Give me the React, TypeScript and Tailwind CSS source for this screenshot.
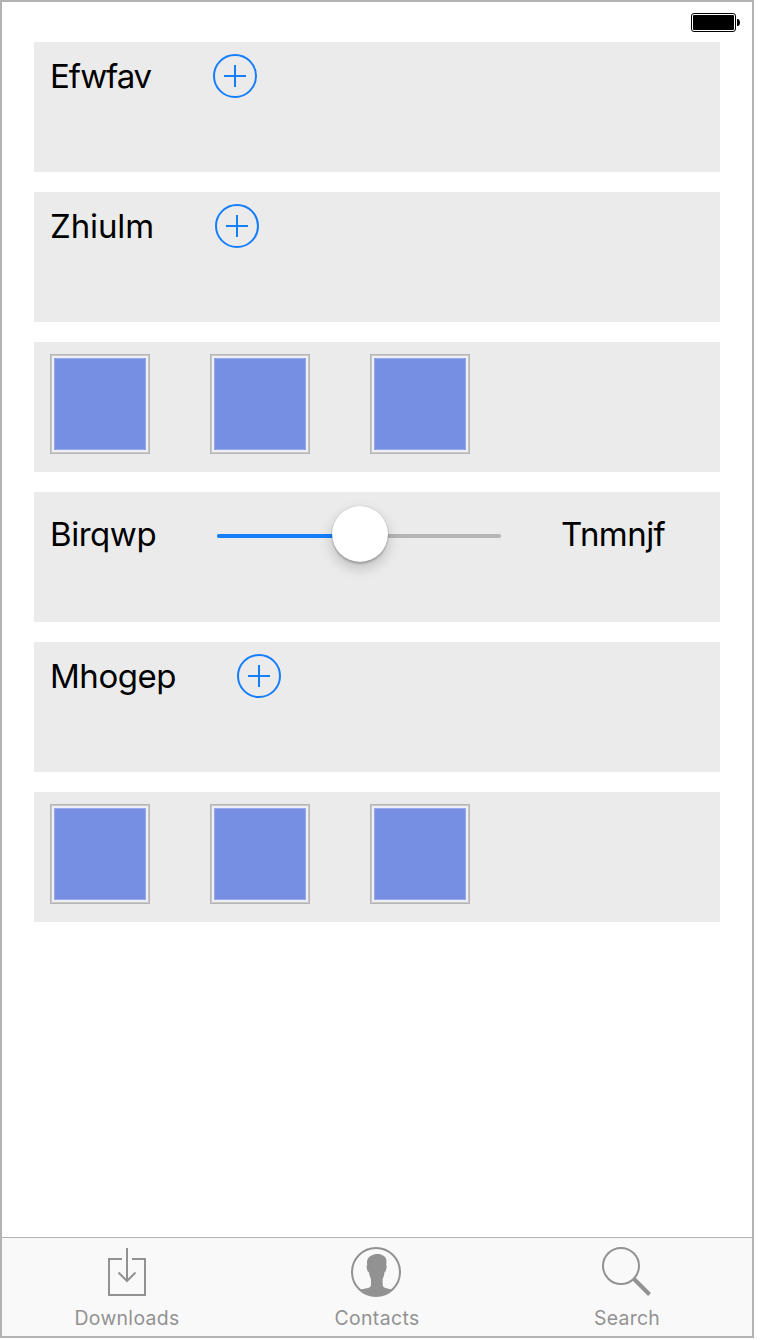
import type { ReactNode } from "react";

function Row({ children, className = "" }: { children: ReactNode; className?: string }) {
  return (
    <section className={`flex h-[130px] shrink-0 items-start bg-[#ebebeb] px-4 pt-3 ${className}`}>
      {children}
    </section>
  );
}

function Label({ text, className }: { text: string; className: string }) {
  return (
    <span className={`h-11 shrink-0 whitespace-nowrap text-[33px] leading-[44px] text-black ${className}`}>
      {text}
    </span>
  );
}

function AddButton() {
  return (
    <button type="button" aria-label="Add" className="size-11 shrink-0">
      <svg viewBox="0 0 44 44" className="block size-11" fill="none" stroke="#147efb" strokeWidth="2">
        <circle cx="22" cy="22" r="21" />
        <path d="M11 22H33M22 11V33" />
      </svg>
    </button>
  );
}

function Swatches() {
  return (
    <Row className="gap-[60px]">
      {[0, 1, 2].map((i) => (
        <div key={i} className="size-[100px] border border-[#b6b6b6] bg-[#c8c8c8] p-px">
          <div className="size-full border border-[#f0f0f2] bg-[#eceffa] p-px">
            <div className="size-full border border-[#95a9ec] bg-[#768fe3]" />
          </div>
        </div>
      ))}
    </Row>
  );
}

function Slider() {
  return (
    <div className="relative mx-[60px] flex h-11 w-[284px] shrink-0 items-center pt-1">
      <div className="flex h-1 w-full overflow-hidden rounded-full bg-[#b5b5b5]">
        <div className="w-1/2 bg-[#147efb]" />
      </div>
      <div className="absolute left-[115px] top-[-6px] size-14 rounded-full bg-white shadow-[0_0_1px_rgba(0,0,0,0.25),0_2px_2px_rgba(0,0,0,0.2),0_6px_14px_rgba(0,0,0,0.2)]" />
    </div>
  );
}

function Tab({ label, className, children }: { label: string; className: string; children: ReactNode }) {
  return (
    <button type="button" className="flex w-[250px] flex-col items-center pt-2 text-[#929292]">
      <svg viewBox="0 0 52 52" className="size-[52px] shrink-0" fill="none" stroke="currentColor" strokeWidth="2">
        {children}
      </svg>
      <span className={`mt-2 whitespace-nowrap text-[19.4px] leading-6 ${className}`}>{label}</span>
    </button>
  );
}

export default function App() {
  return (
    <div className="h-[1340px] w-[760px] bg-white font-['Inter','Liberation_Sans',sans-serif]">
      <div className="flex h-[1338px] w-[754px] flex-col border-2 border-[#b2b2b2] bg-white">
        <header className="flex h-10 shrink-0 justify-end pr-3 pt-[11px]">
          <svg viewBox="0 0 49 19" className="h-[19px] w-[49px]">
            <rect x="0.5" y="0.5" width="44" height="18" rx="2.5" fill="none" stroke="#000" />
            <rect x="2" y="2" width="41" height="15" rx="1" />
            <path d="M46 6h1.2Q49 7 49 9.5T47.2 13H46Z" />
          </svg>
        </header>
        <main className="flex flex-1 flex-col gap-5 pl-8 pr-8">
          <Row>
            <Label text="Efwfav" className="w-[163px] tracking-[-1.15px]" />
            <AddButton />
          </Row>
          <Row>
            <Label text="Zhiulm" className="w-[165px] tracking-[-0.1px]" />
            <AddButton />
          </Row>
          <Swatches />
          <Row className="pt-5">
            <Label text="Birqwp" className="w-[107px] tracking-[-0.45px]" />
            <Slider />
            <Label text="Tnmnjf" className="w-[105px] tracking-[-0.55px]" />
          </Row>
          <Row>
            <Label text="Mhogep" className="w-[187px] tracking-[-0.45px]" />
            <AddButton />
          </Row>
          <Swatches />
        </main>
        <nav className="flex h-[99px] shrink-0 border-t border-[#b2b2b2] bg-[#f9f9f9]">
          <Tab label="Downloads" className="tracking-[0.33px]">
            <path d="M21 13H8V49H44V13H31M26 2V35M17.5 26.5L26 35L34.5 26.5" />
          </Tab>
          <Tab label="Contacts" className="tracking-[0.4px]">
            <circle cx="25" cy="26" r="24" />
            <path
              d="M16.2 19C15.2 13 18 10.5 21 9.2C24 7.6 29 7.6 31.5 9.2C35 10.5 36 13 35.2 19Q36.2 20 35 24Q34.6 26 33.6 26Q33.2 30 31.6 33V38.5Q31.6 41 34.5 42L40.5 43.5Q34 50 25 50T9.5 43.5L17 42Q20 41 20 38.5V33Q18.4 30 17.8 26Q16.8 26 16.2 24Q15 20 16.2 19Z"
              fill="currentColor"
              stroke="none"
            />
          </Tab>
          <Tab label="Search" className="tracking-[0.3px]">
            <circle cx="20" cy="20" r="18" />
            <path d="M32.5 32.5L48.5 48.5" strokeWidth="4" />
          </Tab>
        </nav>
      </div>
    </div>
  );
}
